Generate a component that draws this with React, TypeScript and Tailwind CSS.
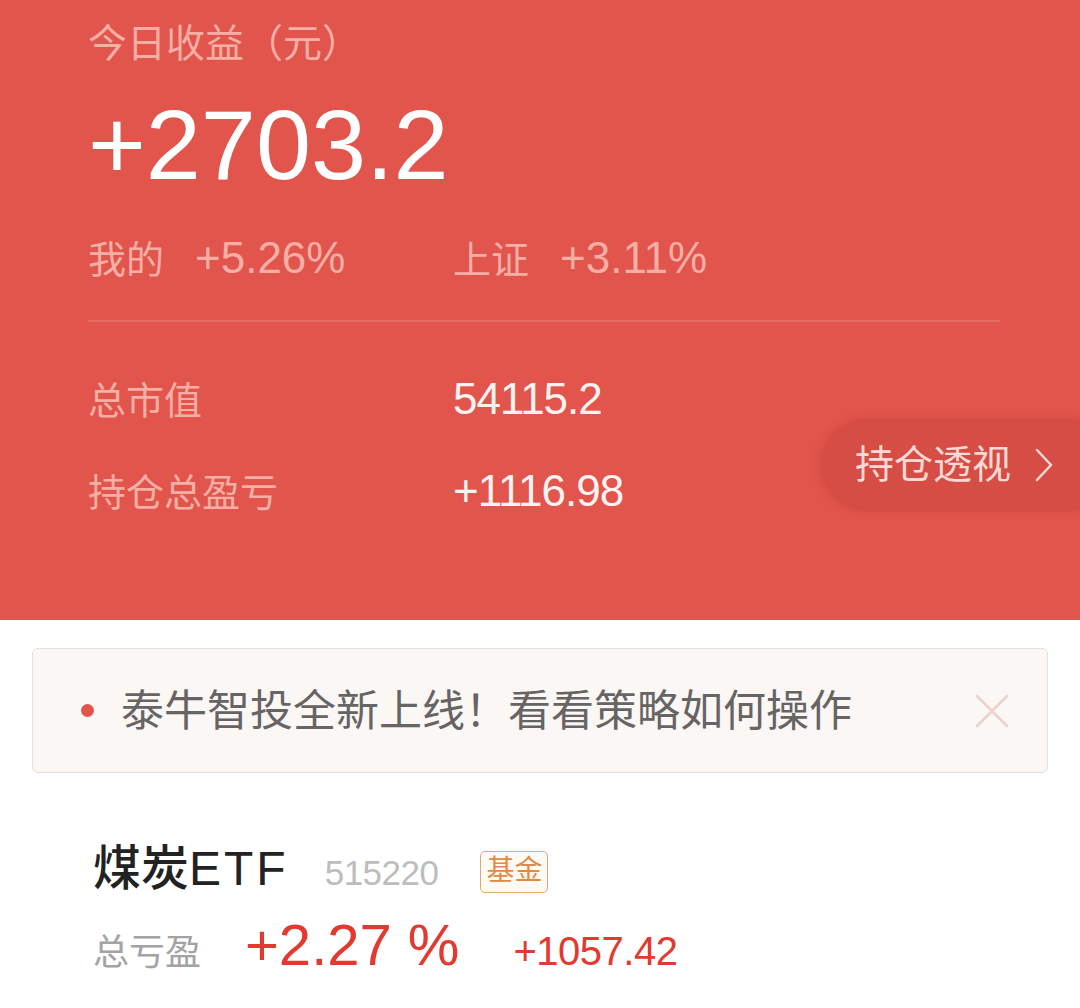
import React from "react";

const FONT = { fontFamily: '"Liberation Sans", "Noto Sans CJK SC", sans-serif' };

export default function App() {
  return (
    <div className="w-[1080px] h-[1008px] bg-white overflow-hidden" style={FONT}>
      {/* Red header */}
      <div className="h-[620px] bg-[#e1554c] pl-[88px] pt-[24px]">
        <div className="text-[39px] leading-[40px] text-[#f6aea5]">今日收益（元）</div>
        <div className="mt-[31px] text-[99px] leading-[99px] text-white">+2703.2</div>
        <div className="mt-[40px] flex items-baseline h-[48px] leading-[48px] text-[#f6aea5]">
          <span className="w-[107px] text-[38px]">我的</span>
          <span className="w-[258px] text-[44px]">+5.26%</span>
          <span className="w-[107px] text-[38px]">上证</span>
          <span className="text-[44px]">+3.11%</span>
        </div>
        <div className="mt-[38px] mr-[80px] h-[2px] bg-[#e66b62]" />
        <div className="flex">
          <div className="flex-1 pt-[54px]">
            <div className="flex items-baseline h-[46px]">
              <span className="w-[365px] text-[38px] leading-[46px] text-[#f6aea5]">总市值</span>
              <span className="text-[44px] leading-[46px] text-[#fff3f1] tracking-[-1px]">54115.2</span>
            </div>
            <div className="mt-[46px] flex items-baseline h-[46px]">
              <span className="w-[365px] text-[38px] leading-[46px] text-[#f6aea5]">持仓总盈亏</span>
              <span className="text-[44px] leading-[46px] text-[#fff3f1] tracking-[-1px]">+1116.98</span>
            </div>
          </div>
          <div className="mt-[98px] h-[90px] w-[258px] rounded-l-full bg-[#d64d45] shadow-[0_0_10px_rgba(170,40,35,0.35)] flex items-center pl-[33px]">
            <span className="text-[39px] leading-[44px] text-[#fbdad5]">持仓透视</span>
            <svg className="ml-[24px]" width="18" height="34" viewBox="0 0 18 34" fill="none">
              <path d="M2 2 L16 17 L2 32" stroke="#fbdad5" strokeWidth="2.5" strokeLinecap="round" strokeLinejoin="round" />
            </svg>
          </div>
        </div>
      </div>

      {/* Notice card */}
      <div className="mx-[32px] mt-[28px] h-[125px] rounded-[6px] border border-[#e6e0dd] bg-[#fbf7f5] flex items-center pl-[48px] pr-[38px]">
        <span className="w-[13px] h-[13px] rounded-full bg-[#e1554c]" />
        <span className="ml-[27px] flex-1 text-[43px] leading-[50px] text-[#666464]">泰牛智投全新上线！看看策略如何操作</span>
        <svg width="34" height="34" viewBox="0 0 34 34" fill="none">
          <path d="M2 2 L32 32 M32 2 L2 32" stroke="#ebd2cf" strokeWidth="2.5" strokeLinecap="round" />
        </svg>
      </div>

      {/* Holding item */}
      <div className="pl-[93px] pt-[68px]">
        <div className="flex items-baseline">
          <span className="text-[48px] leading-[56px] font-medium text-[#222222]">
            煤炭<span className="tracking-[3px]">ETF</span>
          </span>
          <span className="ml-[36px] text-[35px] leading-[40px] text-[#bdbdbd] tracking-[-0.5px]">515220</span>
          <span className="ml-[42px] self-center mt-[6px] h-[42px] px-[5px] rounded-[5px] border-[1.5px] border-[#dca874] bg-[#fffaf3] text-[28px] leading-[38px] text-[#e08a44]">基金</span>
        </div>
        <div className="mt-[18px] flex items-baseline">
          <span className="w-[152px] text-[36px] leading-[50px] text-[#a3a3a3]">总亏盈</span>
          <span className="text-[58px] leading-[60px] text-[#e23a30]">+2.27 %</span>
          <span className="ml-[54px] text-[40px] leading-[50px] text-[#e23a30] tracking-[-0.5px]">+1057.42</span>
        </div>
      </div>
    </div>
  );
}
